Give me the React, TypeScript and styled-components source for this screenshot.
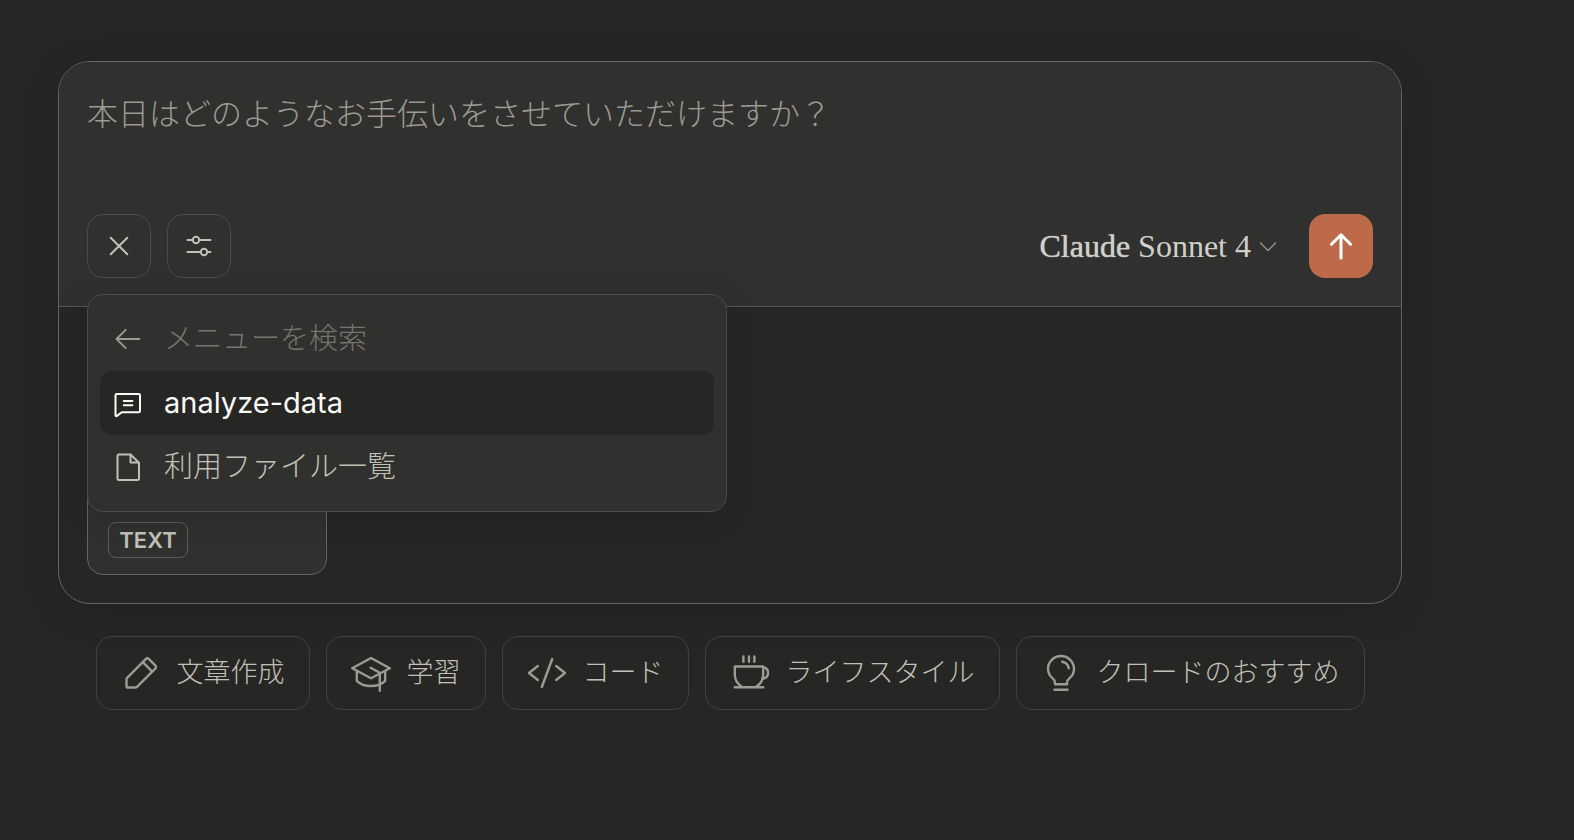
import React from "react";
import styled, { createGlobalStyle } from "styled-components";

const sans = `Inter, "Noto Sans CJK JP", sans-serif`;

const GlobalStyle = createGlobalStyle`
  *, *::before, *::after { box-sizing: border-box; }
  body {
    margin: 0;
    background: #262624;
    color: #c2c0b6;
    font-family: ${sans};
  }
  button, input, textarea { font-family: inherit; margin: 0; }
`;

const Page = styled.main`
  display: flex;
  flex-direction: column;
  gap: 32px;
  padding: 61px 172px 61px 58px;
`;

const Composer = styled.form`
  border: 1px solid #65645f;
  border-radius: 32px;
  box-shadow: 0 8px 40px rgba(0, 0, 0, 0.12);
`;

const ComposerBody = styled.div`
  display: flex;
  flex-direction: column;
  gap: 56px;
  padding: 28px;
  background: #30302e;
  border-radius: 31px 31px 0 0;
`;

const Prompt = styled.textarea`
  display: block;
  width: 100%;
  height: 68px;
  padding: 0;
  border: 0;
  outline: 0;
  resize: none;
  background: transparent;
  color: #faf9f5;
  font-size: 31px;
  font-weight: 300;
  line-height: 48px;
  &::placeholder { color: #9c9a92; opacity: 1; }
`;

const Toolbar = styled.div`
  position: relative;
  display: flex;
  align-items: center;
  gap: 16px;
`;

const IconButton = styled.button<{ $primary?: boolean }>`
  display: flex;
  align-items: center;
  justify-content: center;
  width: 64px;
  height: 64px;
  padding: 0;
  border: ${(p) => (p.$primary ? "0" : "1px solid #4a4a47")};
  border-radius: 16px;
  background: ${(p) => (p.$primary ? "#bd6a4a" : "transparent")};
  color: ${(p) => (p.$primary ? "#ffffff" : "#c2c0b6")};
`;

const ModelButton = styled.button`
  display: flex;
  align-items: center;
  gap: 8px;
  margin-left: auto;
  padding: 0 16px;
  border: 0;
  background: transparent;
  color: #d0cfca;
  font-family: "Liberation Serif", serif;
  font-size: 32px;
  line-height: 40px;
`;

const Brand = styled.span`
  text-shadow: 0 0 1px #d0cfca;
`;

const Menu = styled.div`
  position: absolute;
  z-index: 1;
  top: calc(100% + 16px);
  left: 0;
  width: 640px;
  padding: 12px;
  border: 1px solid #4a4a47;
  border-radius: 16px;
  background: #30302e;
  box-shadow: 0 4px 32px rgba(0, 0, 0, 0.14);
`;

const MenuRow = styled.div`
  display: flex;
  align-items: center;
  gap: 20px;
  height: 64px;
  padding: 0 12px;
  color: #9c9a92;
`;

const BackButton = styled.button`
  display: flex;
  padding: 0;
  border: 0;
  background: transparent;
  color: inherit;
`;

const SearchInput = styled.input`
  flex: 1;
  min-width: 0;
  padding: 0;
  border: 0;
  outline: 0;
  background: transparent;
  color: #faf9f5;
  font-size: 29px;
  font-weight: 300;
  line-height: 40px;
  &::placeholder { color: #76746e; opacity: 1; }
`;

const MenuItem = styled.button<{ $active?: boolean }>`
  display: flex;
  align-items: center;
  gap: 20px;
  width: 100%;
  height: 64px;
  padding: 0 12px;
  border: 0;
  border-radius: 12px;
  background: ${(p) => (p.$active ? "#262624" : "transparent")};
  color: ${(p) => (p.$active ? "#faf9f5" : "#c2c0b6")};
  font-size: 29px;
  font-weight: ${(p) => (p.$active ? 400 : 300)};
  line-height: 40px;
`;

const Attachments = styled.div`
  display: flex;
  gap: 24px;
  padding: 28px;
  border-top: 1px solid #565551;
`;

const FileCard = styled.div`
  display: flex;
  align-items: flex-end;
  width: 240px;
  height: 240px;
  padding: 16px 20px;
  border: 1px solid #65645f;
  border-radius: 16px;
  background: #30302e;
`;

const FileType = styled.span`
  display: flex;
  align-items: center;
  justify-content: center;
  width: 80px;
  height: 36px;
  border: 1px solid #5d5c58;
  border-radius: 8px;
  color: #c2c0b6;
  font-size: 22px;
  font-weight: 600;
  line-height: 32px;
`;

const Chips = styled.nav`
  display: flex;
  flex-wrap: wrap;
  justify-content: center;
  gap: 16px;
`;

const Chip = styled.button`
  display: flex;
  align-items: center;
  gap: 16px;
  height: 74px;
  padding: 0 24px;
  border: 1px solid #41413e;
  border-radius: 16px;
  background: transparent;
  color: #c2c0b6;
  font-size: 27px;
  font-weight: 300;
  line-height: 40px;
  white-space: nowrap;
  svg { color: #9c9a92; }
`;

type IconProps = {
  size?: number;
  width?: number;
  stroke?: number;
  children: React.ReactNode;
};

const Icon = ({ size = 32, width = size, stroke = 2, children }: IconProps) => (
  <svg
    width={width}
    height={size}
    viewBox={`0 0 ${width} ${size}`}
    fill="none"
    stroke="currentColor"
    strokeWidth={stroke}
    strokeLinecap="round"
    strokeLinejoin="round"
    aria-hidden="true"
  >
    {children}
  </svg>
);

const chips = [
  {
    label: "文章作成",
    art: (
      <>
        <path d="M5.5 33.5V26.2a2 2 0 0 1 .6-1.4L25 5.8a1.9 1.9 0 0 1 2.7 0l6.8 6.8a1.9 1.9 0 0 1 0 2.7L16 33.9a2 2 0 0 1-1.4.6H6.6a1 1 0 0 1-1.1-1Z" />
        <path d="M21.8 9.2l9.2 9.2" />
      </>
    ),
  },
  {
    label: "学習",
    art: (
      <>
        <path d="M1.2 15.3 20 5l18.8 10.3L20 25.3Z" />
        <path d="M5.8 18.5v9.3C9.5 31.4 14.4 33 20 33s10.5-1.6 14.2-5.2v-9.3" />
        <path d="M19.6 14.8l9.2 5v18" />
      </>
    ),
  },
  {
    label: "コード",
    art: (
      <>
        <path d="M10.8 13 2 20l8.8 7" />
        <path d="M29.2 13 38 20l-8.8 7" />
        <path d="M25.2 6 14.8 34" />
      </>
    ),
  },
  {
    label: "ライフスタイル",
    art: (
      <>
        <path d="M13.4 3.5v5.3M19 3.5v5.3M24.4 3.5v5.3" />
        <path d="M11.5 33.5C7 30.5 4.8 26.500 4.800 21.500V13.500H33.200V21.500C33.200 26.500 31 30.500 26.500 33.500" />
        <path d="M33.200 14.200c3.200.6 4.900 2.600 4.900 5.600 0 3.300-2 5.500-5.900 6" />
        <path d="M4.800 34.300h28.400" />
      </>
    ),
  },
  {
    label: "クロードのおすすめ",
    art: (
      <>
        <path d="M14 31.200v-1.600c0-1.700-.9-3-2.300-4.200A12.900 12.900 0 0 1 7 16a13 13 0 0 1 26 0c0 3.900-1.800 7-4.700 9.400-1.400 1.200-2.300 2.500-2.300 4.200v1.600Z" />
        <path d="M13.500 36.700h13" />
        <path d="M21.200 8.800c3.600.6 6 3 6.600 6.600" />
      </>
    ),
  },
];

export default function App() {
  return (
    <>
      <GlobalStyle />
      <Page>
        <Composer onSubmit={(e) => e.preventDefault()}>
          <ComposerBody>
            <Prompt
              aria-label="メッセージ"
              placeholder="本日はどのようなお手伝いをさせていただけますか？"
            />
            <Toolbar>
              <IconButton type="button" aria-label="閉じる">
                <Icon>
                  <path d="M7.700 7.700l16.600 16.600M24.300 7.700L7.700 24.300" />
                </Icon>
              </IconButton>
              <IconButton type="button" aria-label="設定">
                <Icon>
                  <path d="M4.500 10h5.300M16.200 10h11.300M4.500 22h13.300M24.200 22h3.300" />
                  <circle cx="13" cy="10" r="3.200" />
                  <circle cx="21" cy="22" r="3.200" />
                </Icon>
              </IconButton>
              <ModelButton type="button">
                <span>
                  <Brand>Claude</Brand> Sonnet 4
                </span>
                <Icon width={18} size={32} stroke={1.500}>
                  <path d="M1.500 13l7.500 7.500 7.500-7.500" stroke="#8f8e88" />
                </Icon>
              </ModelButton>
              <IconButton type="submit" $primary aria-label="送信">
                <Icon stroke={3}>
                  <path d="M16 28V5M6.500 14.300L16 4.800l9.500 9.500" />
                </Icon>
              </IconButton>
              <Menu>
                <MenuRow>
                  <BackButton type="button" aria-label="戻る">
                    <Icon stroke={1.800}>
                      <path d="M27.500 16H4.800M13.700 6.800L4.500 16l9.200 9.200" />
                    </Icon>
                  </BackButton>
                  <SearchInput aria-label="メニューを検索" placeholder="メニューを検索" />
                </MenuRow>
                <MenuItem type="button" $active>
                  <Icon>
                    <path d="M3.500 28V8.200a1.200 1.200 0 0 1 1.200-1.200h22.100a1.200 1.200 0 0 1 1.200 1.200v15.900a1.200 1.200 0 0 1-1.200 1.200H9.800L5 28.900c-.8.5-1.500.1-1.500-.9Z" />
                    <path d="M11.800 14h8.600M11.800 18.200h8.600" />
                  </Icon>
                  analyze-data
                </MenuItem>
                <MenuItem type="button">
                  <Icon>
                    <path d="M18.500 3.500H7A1.500 1.500 0 0 0 5.500 5v22.500A1.500 1.500 0 0 0 7 29h18.500a1.500 1.500 0 0 0 1.500-1.500V11.800Z" />
                    <path d="M18.500 3.800v7.700h8" />
                  </Icon>
                  利用ファイル一覧
                </MenuItem>
              </Menu>
            </Toolbar>
          </ComposerBody>
          <Attachments>
            <FileCard>
              <FileType>TEXT</FileType>
            </FileCard>
          </Attachments>
        </Composer>
        <Chips>
          {chips.map((chip) => (
            <Chip key={chip.label} type="button">
              <Icon size={40} stroke={2.400}>
                {chip.art}
              </Icon>
              {chip.label}
            </Chip>
          ))}
        </Chips>
      </Page>
    </>
  );
}
